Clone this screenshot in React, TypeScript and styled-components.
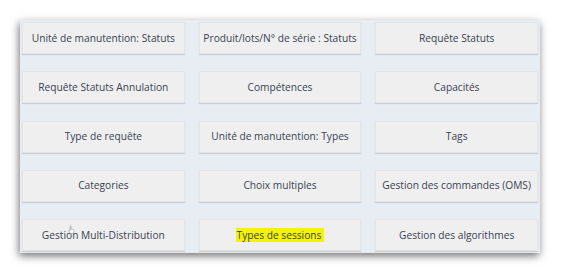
import React from 'react';
import styled, { createGlobalStyle } from 'styled-components';

const GlobalStyle = createGlobalStyle`
  html, body {
    margin: 0;
    padding: 0;
    background: #ffffff;
  }
  body {
    font-family: 'Open Sans', 'Liberation Sans', sans-serif;
  }
`;

const Page = styled.div`
  width: 561px;
  height: 272px;
  padding: 20px 0 0 20px;
  box-sizing: border-box;
`;

const Panel = styled.div`
  width: 520px;
  box-sizing: border-box;
  padding: 2px;
  background-color: #e8ecf3;
  box-shadow: -1px 3px 8px rgba(0, 0, 0, 0.55);
  display: grid;
  grid-template-columns: repeat(3, 1fr);
  column-gap: 14px;
  row-gap: 17.3px;
`;

const Tile = styled.div`
  position: relative;
  height: 32px;
  padding-bottom: 1px;
  display: flex;
  align-items: center;
  justify-content: center;
  background-color: #efefef;
  border: 1px solid #e2e4e8;
  box-shadow: 0 1px 1px rgba(0, 0, 0, 0.12);
  box-sizing: border-box;
  color: #3a4254;
  font-size: 10.2px;
  white-space: nowrap;
`;

const Marked = styled.span`
  background-color: #f4f400;
  padding: 0 3px 0 1px;
`;

const Pointer = styled.svg`
  position: absolute;
  left: 45px;
  top: 5px;
  width: 7px;
  height: 9px;
`;

interface Item {
  label: string;
  marked?: boolean;
  cursor?: boolean;
}

const items: Item[] = [
  { label: 'Unité de manutention: Statuts' },
  { label: 'Produit/lots/N° de série : Statuts' },
  { label: 'Requête Statuts' },
  { label: 'Requête Statuts Annulation' },
  { label: 'Compétences' },
  { label: 'Capacités' },
  { label: 'Type de requête' },
  { label: 'Unité de manutention: Types' },
  { label: 'Tags' },
  { label: 'Categories' },
  { label: 'Choix multiples' },
  { label: 'Gestion des commandes (OMS)' },
  { label: 'Gestion Multi-Distribution', cursor: true },
  { label: 'Types de sessions', marked: true },
  { label: 'Gestion des algorithmes' },
];

const App: React.FC = () => (
  <>
    <GlobalStyle />
    <Page>
      <Panel>
        {items.map((item) => (
          <Tile key={item.label}>
            {item.marked ? <Marked>{item.label}</Marked> : item.label}
            {item.cursor && (
              <Pointer viewBox="0 0 7 9">
                <path
                  d="M2 8.5 L1 5.5 Q0.8 4.8 1.6 5 L2.2 5.6 L2.2 1 Q2.6 0.3 3 1 L3 4 L5.5 4.6 Q6.3 4.9 6 5.8 L5.4 8.5 Z"
                  fill="#ffffff"
                  stroke="#8a8f99"
                  strokeWidth="0.6"
                />
              </Pointer>
            )}
          </Tile>
        ))}
      </Panel>
    </Page>
  </>
);

export default App;
